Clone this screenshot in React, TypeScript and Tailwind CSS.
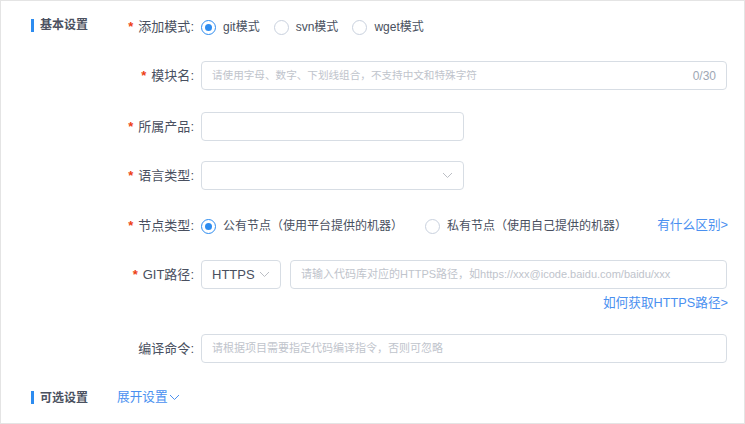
import React from "react";

const font = { fontFamily: '"Liberation Sans", "Noto Sans CJK SC", sans-serif' };

const Chevron = ({ className = "" }: { className?: string }) => (
  <svg width="11" height="7" viewBox="0 0 11 7" className={className}>
    <path d="M1 1l4.5 4.5L10 1" fill="none" stroke="currentColor" strokeWidth="1" />
  </svg>
);

const Radio = ({ checked, label }: { checked?: boolean; label: string }) => (
  <label className="flex items-center">
    <span
      className={
        "w-[15px] h-[15px] rounded-full border flex items-center justify-center bg-white " +
        (checked ? "border-[#2d8cf0]" : "border-[#c9d1de]")
      }
    >
      {checked && <span className="w-[7px] h-[7px] rounded-full bg-[#2d8cf0]" />}
    </span>
    <span className="ml-[7px] text-[12px] text-[#495060]">{label}</span>
  </label>
);

const Label = ({ text, required }: { text: string; required?: boolean }) => (
  <div className="w-[84px] pr-[7px] flex justify-end items-center text-[13px] text-[#495060] shrink-0">
    {required && <span className="text-[#ed3f14] mr-[5px] text-[13px] font-bold">*</span>}
    <span>{text}:</span>
  </div>
);

const Input = ({
  placeholder,
  className = "",
  suffix,
  size = "text-[11px]",
}: {
  placeholder?: string;
  className?: string;
  suffix?: string;
  size?: string;
}) => (
  <div
    className={
      "h-[29px] border border-[#d7dde4] rounded-[4px] bg-white flex items-center px-[10px] " + className
    }
  >
    <span className={"text-[#c0c4cc] flex-1 truncate " + size}>{placeholder}</span>
    {suffix && <span className="text-[12px] text-[#9ea7b4]">{suffix}</span>}
  </div>
);

const SectionTitle = ({ text }: { text: string }) => (
  <div className="flex items-center">
    <span className="w-[3px] h-[13px] bg-[#2d8cf0]" />
    <span className="ml-[6px] text-[12px] font-bold text-[#4b5160]">{text}</span>
  </div>
);

export default function App() {
  return (
    <div style={font} className="w-[745px] h-[424px] bg-white border border-[#e4e4e4] relative">
      <div className="flex">
        <div className="w-[116px] pl-[30px] pt-[15px] shrink-0">
          <SectionTitle text="基本设置" />
        </div>
        <div className="w-[610px]">
          <div className="flex items-center h-[28px] mt-[12px]">
            <Label text="添加模式" required />
            <div className="flex items-center gap-[14px]">
              <Radio checked label="git模式" />
              <Radio label="svn模式" />
              <Radio label="wget模式" />
            </div>
          </div>
          <div className="flex items-center mt-[20px]">
            <Label text="模块名" required />
            <Input
              className="flex-1"
              size="text-[10.6px]"
              placeholder="请使用字母、数字、下划线组合，不支持中文和特殊字符"
              suffix="0/30"
            />
          </div>
          <div className="flex items-center mt-[22px]">
            <Label text="所属产品" required />
            <Input className="w-[263px]" />
          </div>
          <div className="flex items-center mt-[20px]">
            <Label text="语言类型" required />
            <div className="w-[263px] h-[29px] border border-[#d7dde4] rounded-[4px] flex items-center justify-end pr-[10px]">
              <Chevron className="text-[#bbbec4]" />
            </div>
          </div>
          <div className="flex items-center h-[28px] mt-[22px]">
            <Label text="节点类型" required />
            <div className="flex items-center gap-[22px]">
              <Radio checked label="公有节点（使用平台提供的机器）" />
              <Radio label="私有节点（使用自己提供的机器）" />
            </div>
            <span className="ml-auto mr-[-1px] text-[12.7px] text-[#4a90f0]">有什么区别&gt;</span>
          </div>
          <div className="flex items-center mt-[20px]">
            <Label text="GIT路径" required />
            <div className="w-[80px] h-[29px] border border-[#d7dde4] rounded-[4px] flex items-center px-[10px] shrink-0">
              <span className="text-[13px] text-[#495060] flex-1">HTTPS</span>
              <Chevron className="text-[#bbbec4]" />
            </div>
            <Input
              className="flex-1 ml-[9px]"
              placeholder="请输入代码库对应的HTTPS路径，如https://xxx@icode.baidu.com/baidu/xxx"
            />
          </div>
          <div className="flex justify-end mt-[6px] mr-[-1px] h-[18px] items-center">
            <span className="text-[12.7px] text-[#4a90f0]">如何获取HTTPS路径&gt;</span>
          </div>
          <div className="flex items-center mt-[21px]">
            <Label text="编译命令" />
            <Input className="flex-1" placeholder="请根据项目需要指定代码编译指令，否则可忽略" />
          </div>
        </div>
      </div>
      <div className="flex items-center mt-[25px]">
        <div className="w-[116px] pl-[30px] shrink-0">
          <SectionTitle text="可选设置" />
        </div>
        <span className="flex items-center text-[12.7px] text-[#4a90f0]">
          展开设置
          <Chevron className="ml-[1px]" />
        </span>
      </div>
    </div>
  );
}
